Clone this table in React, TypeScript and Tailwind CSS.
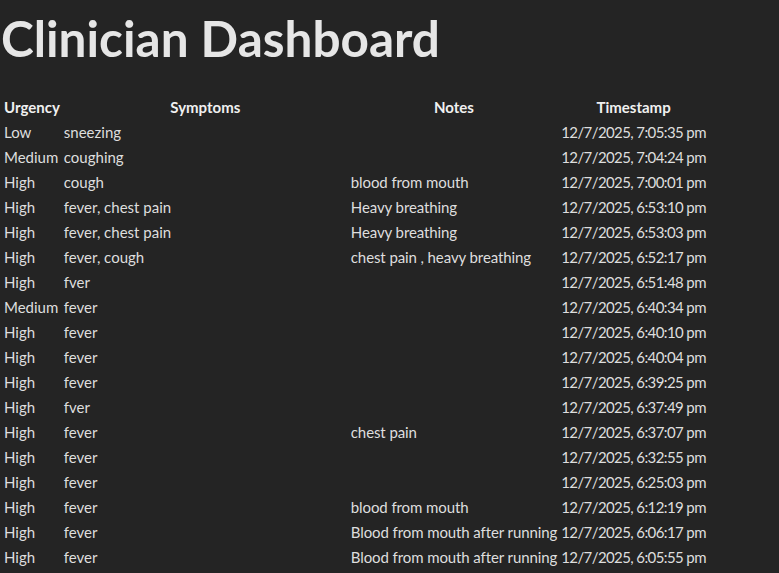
const rows = [
  { urgency: "Low", symptoms: "sneezing", notes: "", time: "12/7/2025, 7:05:35 pm" },
  { urgency: "Medium", symptoms: "coughing", notes: "", time: "12/7/2025, 7:04:24 pm" },
  { urgency: "High", symptoms: "cough", notes: "blood from mouth", time: "12/7/2025, 7:00:01 pm" },
  { urgency: "High", symptoms: "fever, chest pain", notes: "Heavy breathing", time: "12/7/2025, 6:53:10 pm" },
  { urgency: "High", symptoms: "fever, chest pain", notes: "Heavy breathing", time: "12/7/2025, 6:53:03 pm" },
  { urgency: "High", symptoms: "fever, cough", notes: "chest pain , heavy breathing", time: "12/7/2025, 6:52:17 pm" },
  { urgency: "High", symptoms: "fver", notes: "", time: "12/7/2025, 6:51:48 pm" },
  { urgency: "Medium", symptoms: "fever", notes: "", time: "12/7/2025, 6:40:34 pm" },
  { urgency: "High", symptoms: "fever", notes: "", time: "12/7/2025, 6:40:10 pm" },
  { urgency: "High", symptoms: "fever", notes: "", time: "12/7/2025, 6:40:04 pm" },
  { urgency: "High", symptoms: "fever", notes: "", time: "12/7/2025, 6:39:25 pm" },
  { urgency: "High", symptoms: "fver", notes: "", time: "12/7/2025, 6:37:49 pm" },
  { urgency: "High", symptoms: "fever", notes: "chest pain", time: "12/7/2025, 6:37:07 pm" },
  { urgency: "High", symptoms: "fever", notes: "", time: "12/7/2025, 6:32:55 pm" },
  { urgency: "High", symptoms: "fever", notes: "", time: "12/7/2025, 6:25:03 pm" },
  { urgency: "High", symptoms: "fever", notes: "blood from mouth", time: "12/7/2025, 6:12:19 pm" },
  { urgency: "High", symptoms: "fever", notes: "Blood from mouth after running", time: "12/7/2025, 6:06:17 pm" },
  { urgency: "High", symptoms: "fever", notes: "Blood from mouth after running", time: "12/7/2025, 6:05:55 pm" }
];

export default function App() {
  return (
    <div className="min-h-screen bg-[#242424] text-[#dedede] font-['Lato',sans-serif]">
      <h1 className="pl-[1px] pt-[6px] pb-[24px] text-[49.5px] font-bold leading-[64px] text-[#e6e6e6]">
        Clinician Dashboard
      </h1>
      <table className="ml-[1px] border-separate border-spacing-[2px] text-[15px] leading-[23px]">
        <thead>
          <tr className="font-bold text-[#f0f0f0]">
            <th className="w-[57px] px-px text-center">Urgency</th>
            <th className="w-[285px] px-px text-center">Symptoms</th>
            <th className="w-[205px] px-px text-center">Notes</th>
            <th className="w-[143px] px-px text-center">Timestamp</th>
          </tr>
        </thead>
        <tbody>
          {rows.map((r, i) => (
            <tr key={i}>
              <td className="px-px whitespace-nowrap">{r.urgency}</td>
              <td className="px-px whitespace-nowrap">{r.symptoms}</td>
              <td className="px-px whitespace-nowrap tracking-[-0.1px]">{r.notes}</td>
              <td className="px-px whitespace-nowrap tracking-[-0.6px]">{r.time}</td>
            </tr>
          ))}
        </tbody>
      </table>
    </div>
  );
}
